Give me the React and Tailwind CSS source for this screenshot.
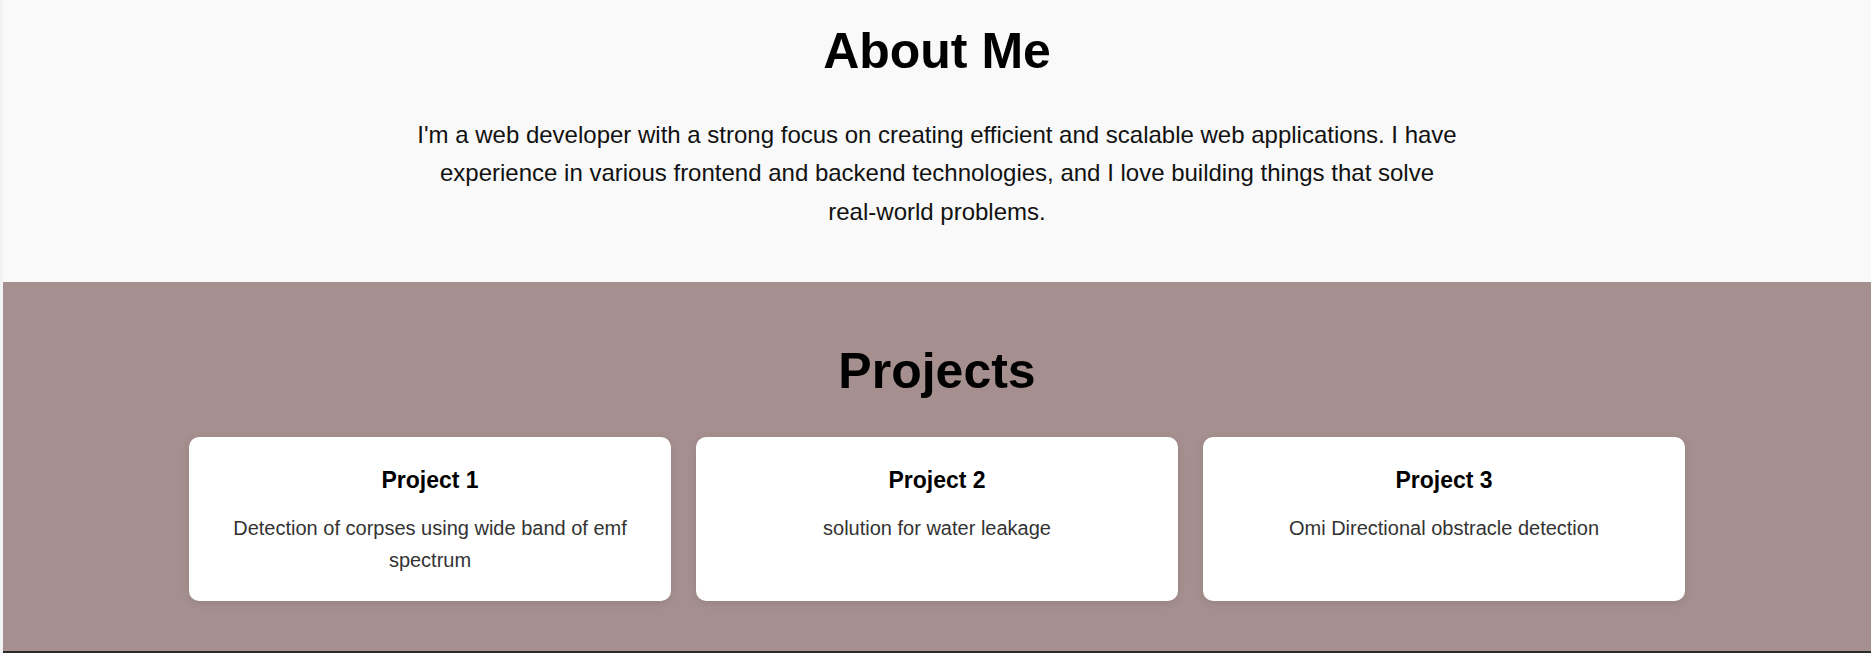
const projects = [
  { id: 1, title: 'Project 1', text: 'Detection of corpses using wide band of emf spectrum' },
  { id: 2, title: 'Project 2', text: 'solution for water leakage' },
  { id: 3, title: 'Project 3', text: 'Omi Directional obstracle detection' },
];

export default function App() {
  return (
    <div className="flex min-h-screen bg-[#f2f2f4] font-['Liberation_Sans',Arial,sans-serif]">
      <div className="w-[3px] shrink-0" />
      <main className="flex-1 min-w-0">
        {/* About */}
        <section className="bg-[#f9f9f9] pt-[23px] pb-[51px] text-center">
          <h1 className="text-[50px] leading-[56px] font-bold text-black">About Me</h1>
          <p className="mx-auto mt-[37px] max-w-[1070px] text-[24px] leading-[38.4px] text-[#111]">
            I'm a web developer with a strong focus on creating efficient and scalable web applications. I have
            experience in various frontend and backend technologies, and I love building things that solve{' '}
            <span className="whitespace-nowrap">real-world</span> problems.
          </p>
        </section>

        {/* Projects */}
        <section className="bg-[#a5908f] pt-[61px] pb-[50px] text-center">
          <h2 className="text-[50px] leading-[56px] font-bold text-black">Projects</h2>
          <div className="mx-auto mt-[38px] grid w-[1496px] grid-cols-3 gap-[25px]">
            {projects.map((p) => (
              <div
                key={p.id}
                className="rounded-[10px] bg-white px-6 pt-[30px] pb-[25px] shadow-[0_2px_8px_rgba(0,0,0,0.1)]"
              >
                <h3 className="text-[23px] leading-[26px] font-bold text-black">{p.title}</h3>
                <p className="mt-[19px] text-[20px] leading-[32px] text-[#333]">{p.text}</p>
              </div>
            ))}
          </div>
        </section>

        <footer className="h-[120px] bg-[#2b2b2b]" />
      </main>
    </div>
  );
}
